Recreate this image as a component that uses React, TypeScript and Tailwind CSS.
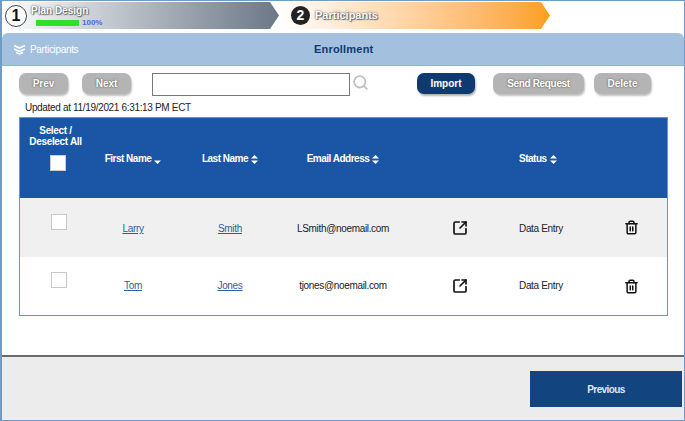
import React from 'react';
import { Search, SquareArrowOutUpRight, Trash2 } from 'lucide-react';

const rows = [
  { first: 'Larry', last: 'Smith', email: 'LSmith@noemail.com', status: 'Data Entry', height: 'h-[59px]', bg: 'bg-[#f0f0f0]', text: 'pt-[2px]' },
  { first: 'Tom', last: 'Jones', email: 'tjones@noemail.com', status: 'Data Entry', height: 'h-[58px]', bg: 'bg-white', text: 'pb-[2px]' },
];

const gridCols = 'grid grid-cols-[76px_74px_120px_106px_123px_81px_1fr] items-center';

const SortIcon: React.FC<{ down?: boolean }> = ({ down }) => (
  <svg width="7" height="9" viewBox="0 0 7 9" className="ml-[3px] inline-block" fill="#fff">
    {!down && <path d="M3.5 0 7 3.6H0z" />}
    <path d="M0 5.4h7L3.5 9z" />
  </svg>
);

const GrayButton: React.FC<{ label: string; className: string }> = ({ label, className }) => (
  <button
    className={`h-[21px] rounded-[7px] bg-[#b4b4b4] text-[10px] font-bold text-white shadow-[1px_2px_2px_rgba(0,0,0,0.25)] [text-shadow:0_0_2px_rgba(50,50,50,0.9)] ${className}`}
  >
    {label}
  </button>
);

export default function App() {
  return (
    <div className="flex h-[421px] w-[685px] flex-col border-y border-r border-l-2 border-[#6f9cc4] bg-white font-['Liberation_Sans',Arial,sans-serif] text-[10px] tracking-[-0.33px] text-[#222]">
      {/* wizard steps */}
      <div className="flex h-[28px] shrink-0 pt-px tracking-normal">
        <div className="flex h-[27px] w-[277px] items-start bg-gradient-to-r from-white to-[#6b7887] [clip-path:polygon(0_0,268px_0,277px_50%,268px_100%,0_100%)]">
          <div className="ml-[3px] mt-[3px] flex h-[22px] w-[22px] items-center justify-center rounded-full border border-[#444] bg-white text-[16px] font-bold text-[#111]">
            1
          </div>
          <div className="ml-[4px] flex flex-col">
            <span className="mt-[3px] text-[10px] leading-[11px] font-bold text-white [text-shadow:0_0_2px_#333,1px_1px_1px_#777]">
              Plan Design
            </span>
            <div className="ml-[5px] mt-[3px] flex items-center">
              <div className="h-[6px] w-[43px] bg-[#2fe02a]" />
              <span className="ml-[3px] text-[8px] leading-[7px] font-bold text-[#3f6fd8]">100%</span>
            </div>
          </div>
        </div>
        <div className="flex h-[27px] w-[271px] items-center bg-gradient-to-r from-white to-[#fb9f16] [clip-path:polygon(0_0,262px_0,271px_50%,262px_100%,0_100%)]">
          <div className="ml-[12px] flex h-[19px] w-[19px] items-center justify-center rounded-full bg-[#222] text-[14px] font-bold text-white">
            2
          </div>
          <span className="ml-[5px] text-[11px] font-bold text-white [text-shadow:0_0_2px_#333,1px_1px_1px_#777]">
            Participants
          </span>
        </div>
      </div>

      {/* section header */}
      <div className="mt-[4px] flex h-[33px] shrink-0 items-center rounded-t-[6px] border-b border-[#8fb3d8] bg-[#a3c0de]">
        <div className="flex w-[300px] items-center">
          <svg width="13" height="11" viewBox="0 0 13 11" className="ml-[11px]" fill="none" stroke="#fff" strokeWidth="1.6">
            <path d="M1 1.5 6.5 4 12 1.5M1 5 6.5 7.5 12 5M3 8.5 6.5 10 10 8.5" />
          </svg>
          <span className="ml-[4px] text-white">Participants</span>
        </div>
        <span className="ml-[12px] text-[11px] font-bold tracking-[0.2px] text-[#123a6e]">Enrollment</span>
      </div>

      {/* toolbar */}
      <div className="mt-[7px] flex h-[23px] shrink-0 items-start pl-[17px]">
        <GrayButton label="Prev" className="w-[49px] tracking-normal" />
        <GrayButton label="Next" className="ml-[14px] w-[49px] tracking-normal" />
        <input className="ml-[21px] h-[23px] w-[198px] border border-[#777] bg-white" />
        <Search size={17} strokeWidth={2.6} className="ml-[2px] mt-px text-[#c0c0c0]" />
        <button className="ml-[48px] h-[21px] w-[58px] rounded-[7px] bg-[#0f3a70] text-[10px] font-bold tracking-normal text-white shadow-[1px_2px_2px_rgba(0,0,0,0.3)]">
          Import
        </button>
        <GrayButton label="Send Request" className="ml-[18px] w-[91px]" />
        <GrayButton label="Delete" className="ml-[10px] w-[57px] tracking-normal" />
      </div>

      <div className="mt-[5px] h-[16px] shrink-0 pl-[23px] leading-[14px]">
        Updated at 11/19/2021 6:31:13 PM ECT
      </div>

      {/* table */}
      <div className="ml-[17px] h-[199px] w-[649px] shrink-0 border border-[#6b94c4]">
        <div className={`${gridCols} h-[80px] bg-[#1a56a5] font-bold tracking-[-0.5px] text-white`}>
          <div className="flex h-full flex-col items-center pt-[7px] leading-[11px] tracking-[-0.33px]">
            <div className="mr-[5px] flex flex-col items-center">
              <span>Select /</span>
              <span>Deselect All</span>
            </div>
            <div className="mt-[8px] h-[16px] w-[16px] border border-[#ccc] bg-white" />
          </div>
          <div className="self-start pt-[33px] text-center">
            First Name
            <SortIcon down />
          </div>
          <div className="self-start pt-[33px] text-center">
            Last Name
            <SortIcon />
          </div>
          <div className="self-start pt-[33px] text-center whitespace-nowrap">
            Email Address
            <SortIcon />
          </div>
          <div />
          <div className="self-start pt-[33px]">
            Status
            <SortIcon />
          </div>
          <div />
        </div>
        {rows.map(row => (
          <div key={row.email} className={`${gridCols} ${row.height} ${row.bg}`}>
            <div className="-mt-[12px] flex justify-center pl-[2px]">
              <div className="h-[16px] w-[16px] border border-[#c8c8c8] bg-white" />
            </div>
            <a className={`text-center text-[#2a5f9e] underline ${row.text}`}>{row.first}</a>
            <a className={`text-center text-[#2a5f9e] underline ${row.text}`}>{row.last}</a>
            <span className={`text-center ${row.text}`}>{row.email}</span>
            <div className="flex justify-center pl-[4px]">
              <SquareArrowOutUpRight size={16} strokeWidth={2.5} className="text-[#111]" />
            </div>
            <span className={row.text}>{row.status}</span>
            <div className="flex justify-center pr-[5px]">
              <Trash2 size={15} strokeWidth={2.4} className="text-[#111]" />
            </div>
          </div>
        ))}
      </div>

      {/* footer */}
      <div className="mt-[39px] flex flex-1 items-start justify-end border-t-2 border-[#6a6a6a] bg-[#ececec] pr-[2px] pt-[14px]">
        <button className="h-[36px] w-[152px] bg-[#12447f] font-bold tracking-[-0.6px] text-[#dfe8f5]">Previous</button>
      </div>
    </div>
  );
}
